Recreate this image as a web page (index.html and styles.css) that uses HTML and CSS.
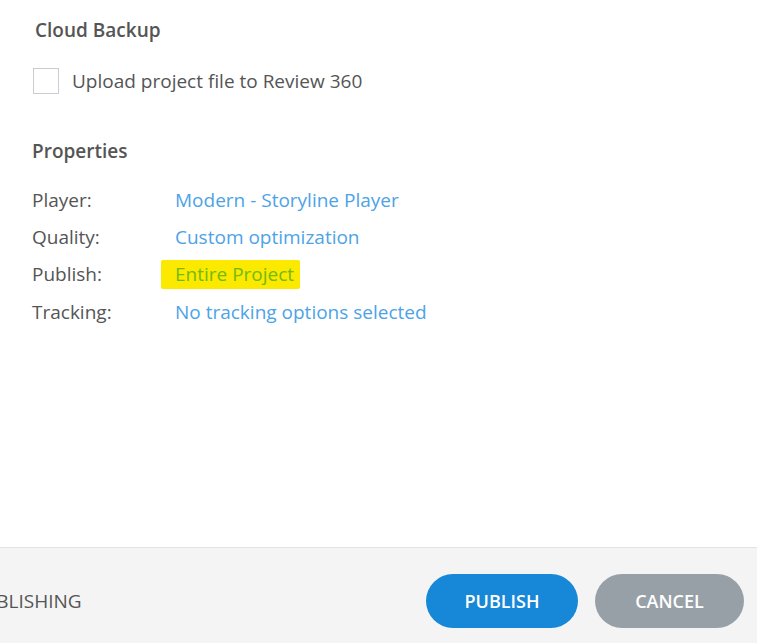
FILE: index.html
```html
<!DOCTYPE html>
<html>
<head>
<meta charset="utf-8">
<link rel="stylesheet" href="styles.css">
</head>
<body>
<div class="dialog">
  <div class="content">
    <h2 class="section-title cloud">Cloud Backup</h2>
    <label class="check-row">
      <span class="checkbox"></span>
      <span class="check-label">Upload project file to Review 360</span>
    </label>
    <h2 class="section-title props">Properties</h2>
    <div class="props-grid">
      <div class="prop-label">Player:</div>
      <div class="prop-value">Modern - Storyline Player</div>
      <div class="prop-label">Quality:</div>
      <div class="prop-value">Custom optimization</div>
      <div class="prop-label">Publish:</div>
      <div class="prop-value"><span class="highlight">Entire Project</span></div>
      <div class="prop-label">Tracking:</div>
      <div class="prop-value">No tracking options selected</div>
    </div>
  </div>
  <div class="footer">
    <div class="footer-left">PUBLISHING</div>
    <div class="footer-buttons">
      <button class="btn btn-primary">PUBLISH</button>
      <button class="btn btn-secondary">CANCEL</button>
    </div>
  </div>
</div>
</body>
</html>
```
FILE: styles.css
```css
html, body {
  margin: 0;
  padding: 0;
  background: #ffffff;
  font-family: "Open Sans", "Noto Sans", sans-serif;
  overflow: hidden;
}
.dialog {
  width: 757px;
  height: 643px;
  display: flex;
  flex-direction: column;
}
.content {
  flex: 1;
  padding: 0 0 0 32px;
}
.section-title {
  margin: 0;
  font-size: 19px;
  font-weight: 600;
  color: #555555;
  line-height: 26px;
}
.cloud {
  padding-top: 17px;
  padding-left: 3px;
}
.check-row {
  display: flex;
  align-items: center;
  gap: 13px;
  margin-top: 25px;
  padding-left: 1px;
}
.checkbox {
  width: 24px;
  height: 24px;
  border: 1px solid #c9cdd2;
  background: #fff;
  flex: none;
}
.check-label {
  font-size: 19px;
  color: #555;
  line-height: 26px;
}
.props {
  margin-top: 44px;
}
.props-grid {
  display: grid;
  grid-template-columns: 143px auto;
  grid-auto-rows: 37.4px;
  align-items: center;
  margin-top: 17px;
  font-size: 19px;
}
.prop-label {
  color: #555;
}
.prop-value {
  color: #4da3e6;
}
.highlight {
  display: inline-block;
  background: #fbe900;
  color: #74ba10;
  margin-left: -14px;
  padding: 1px 6px 2px 14px;
  border-radius: 2px;
  line-height: 26px;
}
.footer {
  height: 96px;
  flex: none;
  box-sizing: border-box;
  padding-top: 10px;
  background: #f4f4f4;
  border-top: 1px solid #dfe3e7;
  display: flex;
  align-items: center;
  justify-content: space-between;
  padding-right: 13px;
}
.footer-left {
  margin-left: -29px;
  font-size: 19px;
  color: #555;
}
.footer-buttons {
  display: flex;
  gap: 17px;
}
.btn {
  border: none;
  height: 54px;
  border-radius: 27px;
  font-family: "Open Sans", "Noto Sans", sans-serif;
  font-size: 18px;
  font-weight: 600;
  color: #fff;
  cursor: pointer;
  padding: 0;
}
.btn-primary {
  width: 152px;
  background: #1787d8;
}
.btn-secondary {
  width: 149px;
  background: #98a0a7;
}
```
